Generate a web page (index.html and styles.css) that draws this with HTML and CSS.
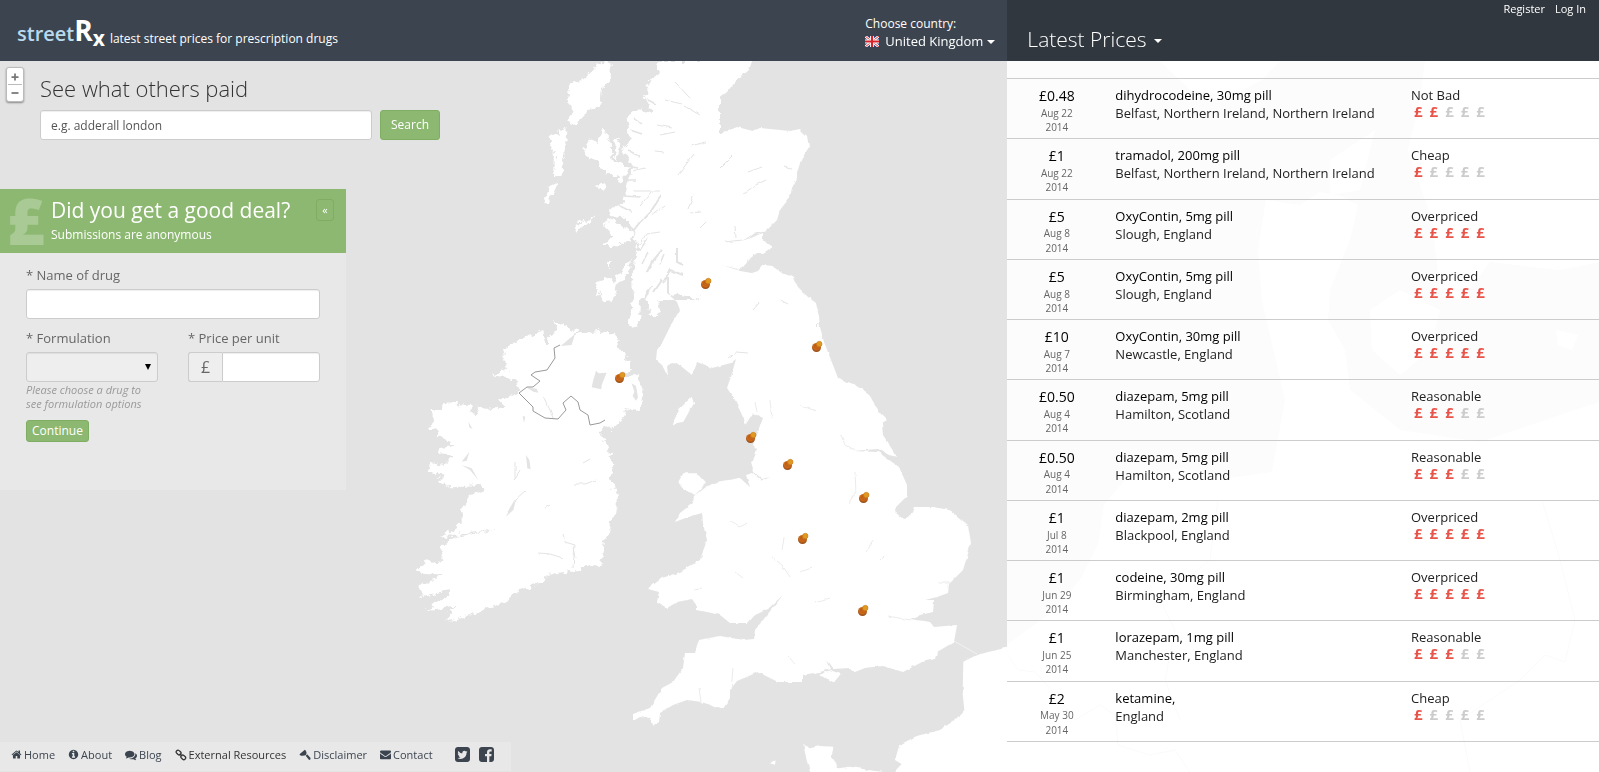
FILE: index.html
```html
<!DOCTYPE html>
<html lang="en">
<head>
<meta charset="utf-8">
<title>StreetRx - latest street prices for prescription drugs</title>
<link rel="stylesheet" href="styles.css">
</head>
<body>
<svg class="map" viewBox="0 61 1599 711" preserveAspectRatio="xMinYMin slice" aria-hidden="true">
  <defs>
    <filter id="coast" filterUnits="userSpaceOnUse" x="380" y="40" width="700" height="760">
      <feTurbulence type="fractalNoise" baseFrequency="0.16" numOctaves="3" seed="4" result="n"/>
      <feDisplacementMap in="SourceGraphic" in2="n" scale="9" xChannelSelector="R" yChannelSelector="G"/>
    </filter>
    <filter id="shore" filterUnits="userSpaceOnUse" x="380" y="40" width="700" height="760">
      <feTurbulence type="fractalNoise" baseFrequency="0.14" numOctaves="2" seed="9" result="n"/>
      <feDisplacementMap in="SourceGraphic" in2="n" scale="3" xChannelSelector="R" yChannelSelector="G"/>
    </filter>
    <radialGradient id="pinBase" cx=".5" cy=".35" r=".65"><stop offset="0" stop-color="#a04c0c"/><stop offset=".55" stop-color="#cf6a1a"/><stop offset="1" stop-color="#8f4a18"/></radialGradient>
    <g id="pin">
      <circle cx="4.500" cy="6.500" r="4.500" fill="url(#pinBase)"/>
      <path d="M2.500 6.500 5 1.500 9.500 4 7 8Z" fill="#c4651a"/>
      <circle cx="7.300" cy="3" r="2.700" fill="#e09a22"/>
      <circle cx="7.300" cy="3" r="2.700" fill="none" stroke="#c87a1c" stroke-width=".6"/>
    </g>
  </defs>
  <rect y="61" width="1599" height="711" fill="#e3e3e3"/>
  <g fill="#fff" filter="url(#shore)">
    <path d="M659 50H756L752 61 749 70 737 80 727 92 717 100 709 107 708 113 700 117 717 115 713 122 706 134 690 152 707 139 713 138 725 132 737 127 753 131 760 128 790 131 800 129 807 136 809 147 801 160 797 173 797 178 792 188 790 197 780 210 777 220 766 231 753 234 742 241 763 233 763 240 773 247 763 253 757 253 748 260 745 266 737 269 722 265 740 271 752 273 758 271 763 265 772 266 782 273 793 277 798 287 808 297 816 303 819 317 820 327 824 342 831 360 838 378 853 384 868 393 880 413 887 420 882 423 883 435 897 457 889 455 878 449 853 451 878 452 899 467 907 485 907 496 896 507 895 512 903 519 910 517 914 507 933 507 950 510 968 525 971 543 967 557 963 570 949 584 948 593 937 597 925 600 934 600 933 612 920 615 910 619 930 622 934 627 957 625 954 642 937 652 935 659 922 662 903 672 883 666 865 668 855 672 850 668 833 669 826 660 830 669 820 672 802 675 802 682 778 682 758 672 737 681 730 690 730 698 723 709 717 708 702 702 687 700 673 705 660 713 659 722 654 727 650 718 640 717 633 721 633 714 650 708 662 688 673 682 683 668 685 653 695 653 699 640 720 636 743 640 754 639 755 630 767 615 783 595 768 609 753 616 747 623 730 623 720 615 707 612 697 610 697 606 692 599 677 602 667 608 657 602 659 592 648 589 662 578 680 572 700 560 707 540 703 523 702 513 688 517 675 522 680 513 693 503 694 496 705 487 717 482 740 478 750 487 746 475 753 473 762 481 770 477 762 479 754 472 751 462 757 449 753 445 758 432 763 418 753 413 746 424 742 415 735 400 727 388 732 373 736 359 731 363 712 368 697 362 692 375 682 367 675 362 667 365 668 377 662 365 656 360 657 350 662 343 672 323 680 310 677 302 667 293 660 270 645 300 700 300 700 50Z"/>
    <g transform="translate(620 360) scale(.33333)">
      <path d="M215 110 222 130 190 185 158 192 175 150Z"/>
      <path d="M175 365 190 340 230 340 258 370 225 405 190 385Z"/>
      <path d="M600 945 630 930 662 942 640 970Z"/>
      <path d="M1180 858 1130 870 1070 885 1030 905 1028 1000 1033 1050 1005 1080 960 1110 890 1128 838 1155 825 1200 845 1212 800 1260H1250V858Z"/>
      <path d="M550 1155 570 1165 600 1158 640 1160 635 1190 652 1215 655 1225 690 1220 760 1232 820 1240V1270H580L560 1200Z"/>
      <path d="M450 1210 467 1198 465 1214Z"/>
    </g>
  </g>
  <g fill="#fff" filter="url(#coast)">
    <path d="M659 61 657 77 647 82 650 92 643 95 653 112 635 110 627 117 630 137 623 150 633 167 628 183 623 203 608 210 610 215 622 216 634 231 638 247 632 273 633 300 628 327 639 325 640 300 648 290 657 280 667 293 700 300 720 200 720 61Z"/>
    <g transform="translate(400 60) scale(.33333)">
      <path d="M628 -10 600 10 545 60 510 70 500 120 520 145 505 180 525 195 560 160 555 145 600 140 605 85 630 65Z"/>
      <path d="M445 230 500 205 495 260 485 350 462 352 465 280Z"/>
      <path d="M475 365 445 380 430 430 440 430 460 400Z"/>
      <path d="M550 270 575 235 590 250 610 205 632 250 635 300 690 320 660 375 650 345 620 345 590 300 555 290Z"/>
      <path d="M610 485 640 475 670 500 700 520 695 545 640 555 600 555 640 530Z"/>
      <path d="M590 462 520 500 530 520Z"/>
      <path d="M585 705 600 660 635 650 650 690 635 725 615 728 605 695Z"/>
      <path d="M640 680 655 640 692 600 690 635 660 670Z"/>
      <path d="M745 705 770 705 778 765 755 765 738 720Z"/>
      <path d="M592 375 615 370 620 390 605 397Z"/>
      <path d="M620 610 632 602 622 628Z"/>
      <path d="M648 240 660 235 650 300 642 290Z"/>
    </g>
    <path transform="translate(400 310) scale(.33333)" d="M465 30 530 65 520 75 600 62 645 75 655 110 690 155 690 175 660 200 715 195 728 240 715 300 680 295 665 330 635 360 605 350 600 375 620 400 640 465 630 510 650 545 650 600 630 640 605 735 605 768 570 765 530 780 440 795 435 815 345 850 330 870 250 900 200 918 175 932 135 925 170 890 80 900 130 865 155 840 65 858 55 830 130 795 45 785 80 750 110 760 130 750 120 715 150 685 240 668 300 655 120 683 185 640 185 600 205 555 255 540 250 528 150 532 115 510 140 495 85 485 90 455 130 465 165 435 120 430 125 410 165 405 130 385 110 380 118 360 80 355 100 345 95 290 120 300 130 280 210 285 220 320 235 290 290 295 320 290 290 270 360 245 350 215 330 207 275 195 320 175 310 120 345 95 430 60 435 100 450 95 445 70 475 60Z"/>
  </g>
  <g fill="#e3e3e3" transform="translate(400 310) scale(.33333)">
    <path d="M482 108 525 72 515 105Z"/>
    <path d="M588 182 596 190 620 188 605 225 604 238 575 232 580 210Z"/>
    <path d="M695 220 708 228 714 262 708 272 698 258 703 245Z"/>
    <path d="M378 232 410 236 415 248 400 245Z"/>
    <path d="M378 435 388 450 392 478 382 475Z"/>
    <path d="M348 568 340 600 318 620 330 595Z"/>
    <path d="M185 455 208 425 200 452Z"/><path d="M185 465 215 475 235 510 210 480Z"/>
    <path d="M205 335 218 358 208 352Z"/><path d="M368 318 376 320 372 338Z"/>
  </g>
  <g fill="none" stroke="#e3e3e3" filter="url(#shore)">
    <path stroke-width="2" d="M634 230 640 222 651 211 661 196M619 218 627 225 634 230M647 272 652 262 662 250M663 283 670 270 683 275M677 248 677 262 683 265M662 280 654 292M668 277 668 292"/>
    <path stroke-width="1.500" d="M628 150 640 157M625 166 638 168M624 180 636 180M622 196 640 197M618 205 632 212M630 130 642 134M633 118 642 124M648 100 656 104M640 250 648 238M642 264 648 252M660 264 664 254"/>
    <path stroke-width="1" d="M678 175 694 154M688 209 694 194M690 213 701 212M675 82 690 98M684 106 700 115M665 100 682 104M660 135 675 132M657 125 672 128M690 146 706 142M655 151 664 152M632 171 645 168M633 191 660 191M640 244 646 234 660 232M640 206 651 192M665 206 652 215M720 168 732 156M742 195 754 186 766 180M748 172 762 167M784 167 792 169M724 242 742 240M700 228 706 222M735 226 736 238M816 326 820 322M780 300 788 304M728 358 736 352 748 353M753 310 760 302"/>
    <path stroke-width="1" stroke="#ebebeb" d="M841 435 845 445 855 451M855 472 856 492 848 504M784 538 782 550M772 557 782 565 790 577M730 520 740 527 747 523M800 572 812 568M866 552 873 540M880 560 884 556M888 616 900 618 910 620M788 656 795 664M755 402 757 412M770 400 772 418M800 405 816 411M695 590 702 588M699 688 701 702M733 668 731 690M938 583 950 583M735 572 743 578M815 603 830 598"/>
    <path stroke-width="1" d="M520 470 514 480M515 462 515 478M526 490 515 500 508 512M575 484 585 484 596 480M574 548 576 558M563 534 565 542 575 545 573 568M538 553 550 554 563 558M545 508 550 505M543 396 550 410 553 418M583 463 590 459"/>
  </g>
  <path fill="none" stroke="#999" stroke-width="1" d="M560 345 554 348 555 358 547 370 535 372 531 375 540 381 533 387 527 387 519 393 533 407 533 411 545 418 558 419 566 410 563 403 571 396 578 402 580 410 588 415 590 425 600 423 605 420"/>
  <path fill="none" stroke="#f1f1f1" d="M954 641 977 654"/>
  <g fill="#fff">
    <path d="M1008 644 1030 628 1052 612 1080 580 1098 545 1104 505 1125 480 1180 468 1230 478 1272 472 1285 400 1262 300 1258 250 1266 200 1300 205 1320 192 1340 196 1358 205 1350 240 1330 290 1328 320 1345 350 1350 390 1400 430 1480 442 1560 415 1599 402V772H1008Z"/>
    <path d="M1160 61H1280L1262 80 1230 96 1190 90Z"/>
    <path d="M1425 61H1599V262L1560 270 1490 262 1462 300 1440 290 1432 220 1408 150 1420 100Z"/>
    <path d="M1370 310 1400 290 1440 310 1430 350 1400 375 1372 350Z"/>
    <path d="M1556 330 1578 335 1572 350 1558 345Z"/>
    <path d="M1330 160 1375 130 1360 190 1330 195Z"/>
  </g>
  <g fill="none" stroke="#d4d4d4">
    <path d="M1008 655 1018 670 1035 672 1060 700 1075 720 1100 705 1115 715 1118 745 1150 755 1175 750 1190 772"/>
    <path d="M1218 500 1210 560 1160 600 1175 630 1165 680 1180 720"/>
    <path d="M1542 500 1560 560 1575 620 1565 662 1545 655 1520 680 1460 720 1470 772"/>
  </g>
  <g>
    <use href="#pin" x="701" y="278"/><use href="#pin" x="812" y="341"/><use href="#pin" x="615" y="372"/>
    <use href="#pin" x="746" y="432"/><use href="#pin" x="783" y="459"/><use href="#pin" x="859" y="492"/>
    <use href="#pin" x="798" y="533"/><use href="#pin" x="858" y="605"/>
  </g>
</svg>

<div class="page">
  <div class="main">
    <header class="topbar">
      <a class="logo" href="#"><span>street</span><b>R</b><b class="logo-x">x</b></a>
      <span class="tagline">latest street prices for prescription drugs</span>
      <div class="country">
        <span>Choose country:</span>
        <button class="country-btn" type="button">
          <svg class="flag" viewBox="0 0 14 11"><path fill="#26417f" d="M0 0h14v11H0z"/><path d="M0 0 14 11M14 0 0 11" stroke="#fff" stroke-width="2.600"/><path d="M0 0 14 11M14 0 0 11" stroke="#d33" stroke-width="1"/><path d="M7 0v11M0 5.500h14" stroke="#fff" stroke-width="4"/><path d="M7 0v11M0 5.500h14" stroke="#d8232a" stroke-width="2.200"/></svg>
          United Kingdom <i class="caret"></i>
        </button>
      </div>
    </header>
    <div class="stage">
      <div class="finder">
        <div class="zoom">
          <button type="button" aria-label="Zoom in"><svg viewBox="0 0 16 16"><path d="M8 4v8M4 8h8" stroke="#777" stroke-width="2"/></svg></button>
          <button type="button" aria-label="Zoom out"><svg viewBox="0 0 16 16"><path d="M4 8h8" stroke="#777" stroke-width="2"/></svg></button>
        </div>
        <form class="search">
          <h1><label for="q">See what others paid</label></h1>
          <div class="search-row">
            <input id="q" type="text" placeholder="e.g. adderall london">
            <button class="btn" type="button">Search</button>
          </div>
        </form>
      </div>
      <section class="panel">
        <div class="panel-head">
          <span class="pound" aria-hidden="true">£</span>
          <div class="panel-title">
            <h2>Did you get a good deal?</h2>
            <p>Submissions are anonymous</p>
          </div>
          <button class="btn collapse" type="button" aria-label="Collapse">«</button>
        </div>
        <form class="panel-body">
          <div class="field">
            <label for="drug">* Name of drug</label>
            <input id="drug" type="text">
          </div>
          <div class="cols">
            <div class="field">
              <label for="form">* Formulation</label>
              <div class="select"><select id="form" disabled><option></option></select></div>
              <small>Please choose a drug to see formulation options</small>
            </div>
            <div class="field">
              <label for="price">* Price per unit</label>
              <div class="group"><span>£</span><input id="price" type="text"></div>
            </div>
          </div>
          <button class="btn small" type="button">Continue</button>
        </form>
      </section>
      <footer class="foot">
        <a href="#"><svg viewBox="0 0 1792 1792"><path d="M1472 992v480q0 26-19 45t-45 19h-384v-384h-256v384h-384q-26 0-45-19t-19-45v-480q0-1 .5-3t.5-3l575-474 575 474q1 2 1 6zm223-69l-62 74q-8 9-21 11h-3q-13 0-21-7l-692-577-692 577q-12 8-24 7-13-2-21-11l-62-74q-8-10-7-23.500t11-21.500l719-599q32-26 76-26t76 26l244 204v-195q0-14 9-23t23-9h192q14 0 23 9t9 23v408l219 182q10 8 11 21.500t-7 23.500z"/></svg>Home</a>
        <a href="#"><svg viewBox="0 0 1792 1792"><path d="M1152 1376v-160q0-14-9-23t-23-9h-96v-512q0-14-9-23t-23-9h-320q-14 0-23 9t-9 23v160q0 14 9 23t23 9h96v320h-96q-14 0-23 9t-9 23v160q0 14 9 23t23 9h448q14 0 23-9t9-23zm-128-896v-160q0-14-9-23t-23-9h-192q-14 0-23 9t-9 23v160q0 14 9 23t23 9h192q14 0 23-9t9-23zm640 416q0 209-103 385.500t-279.500 279.500-385.500 103-385.500-103-279.500-279.500-103-385.500 103-385.500 279.500-279.500 385.500-103 385.500 103 279.500 279.500 103 385.500z"/></svg>About</a>
        <a class="wide" href="#"><svg viewBox="0 0 1792 1792"><path d="M1408 768q0 139-94 257t-256.500 186.500-353.500 68.500q-86 0-176-16-124 88-278 128-36 9-86 16h-3q-11 0-20.500-8t-11.500-21q-1-3-1-6.500t.5-6.500 2-6l2.500-5 3.500-5.500 4-5 4.500-5 4-4.500q5-6 23-25t26-29.500 22.500-29 25-38.500 20.500-44q-124-72-195-177t-71-224q0-139 94-257t256.500-186.500 353.500-68.500 353.500 68.500 256.500 186.500 94 257zm384 256q0 120-71 224.500t-195 176.500q10 24 20.500 44t25 38.500 22.500 29 26 29.500 23 25q1 1 4 4.500t4.500 5 4 5 3.500 5.500l2.500 5 2 6 .5 6.500-1 6.500q-3 14-13 22t-22 7q-50-7-86-16-154-40-278-128-90 16-176 16-271 0-472-132 58 4 88 4 161 0 309-45t264-129q125-92 192-212t67-254q0-77-23-152 129 71 204 178t75 230z"/></svg>Blog</a>
        <a class="wide dark" href="#"><svg viewBox="0 0 14 14"><g fill="none" stroke="currentColor" stroke-width="1.500"><rect x="1.200" y="2" width="6" height="4.200" rx="2" transform="rotate(42 4.200 4.100)"/><rect x="6.600" y="7.600" width="6" height="4.200" rx="2" transform="rotate(42 9.600 9.700)"/><path d="M5.500 5.500 8.500 8.500"/></g></svg>External Resources</a>
        <a class="wide" href="#"><svg viewBox="0 0 14 14"><path d="M6.800.8 8.600 2.600 3.800 8.200 1.200 7.200.6 6ZM7.500 2.500 9 4.500 8 7 5.500 8 4 7ZM7.800 8 9.500 6.200 13.500 10.500Q13.800 12.800 11.800 12.800Z"/></svg>Disclaimer</a>
        <a href="#"><svg viewBox="0 0 1792 1792"><path d="M1792 710v794q0 66-47 113t-113 47h-1472q-66 0-113-47t-47-113v-794q44 49 101 87 362 246 497 345 57 42 92.500 65.500t94.500 48 110 24.500h2q51 0 110-24.500t94.500-48 92.500-65.500q170-123 498-345 57-39 100-87zm0-294q0 79-49 151t-122 123q-376 261-468 325-10 7-42.500 30.500t-54 38-52 32.500-57.500 27-50 9h-2q-23 0-50-9t-57.500-27-52-32.500-54-38-42.500-30.500q-91-64-262-182.500t-205-142.500q-62-42-117-115.500t-55-136.500q0-78 41.500-130t118.500-52h1472q65 0 112.500 47t47.500 113z"/></svg>Contact</a>
        <span class="social">
          <a href="#" aria-label="Twitter"><svg viewBox="128 128 1536 1536"><path d="M1408 610q-56 25-121 34 68-40 93-117-65 38-134 51-61-66-153-66-87 0-148.500 61.500t-61.500 148.500q0 29 5 48-129-7-242-65t-192-155q-29 50-29 106 0 114 91 175-47-1-100-26v2q0 75 50 133.500t123 72.500q-29 8-51 8-13 0-39-4 21 63 74.500 104t121.500 42q-116 90-261 90-26 0-50-3 148 94 322 94 112 0 210-35.500t168-95 120.500-137 75-162 24.500-168.500q0-18-1-27 63-45 105-109zm256-194v960q0 119-84.500 203.500t-203.500 84.500h-960q-119 0-203.500-84.500t-84.500-203.500v-960q0-119 84.500-203.500t203.500-84.500h960q119 0 203.500 84.500t84.500 203.500z"/></svg></a>
          <a href="#" aria-label="Facebook"><svg viewBox="128 128 1536 1536"><path d="M1376 128q119 0 203.500 84.500t84.500 203.500v960q0 119-84.500 203.500t-203.500 84.500h-188v-595h199l30-232h-229v-148q0-56 23.500-84t91.500-28l122-1v-207q-63-9-178-9-136 0-217.500 80t-81.500 226v171h-200v232h200v595h-532q-119 0-203.500-84.500t-84.500-203.500v-960q0-119 84.500-203.500t203.500-84.500h960z"/></svg></a>
        </span>
      </footer>
    </div>
  </div>

  <aside class="side">
    <header class="side-head">
      <nav><a href="#">Register</a><a href="#">Log In</a></nav>
      <button class="side-title" type="button">Latest Prices <i class="caret"></i></button>
    </header>
    <div class="side-body">
      <table class="prices">
        <tbody>
          <tr><td class="cost"><b>£0.48</b><span>Aug 22<br>2014</span></td><td class="drug"><b>dihydrocodeine, 30mg pill</b>Belfast, Northern Ireland, Northern Ireland</td><td class="rate">Not Bad<span><i>£</i><i>£</i><s>£</s><s>£</s><s>£</s></span></td></tr>
          <tr><td class="cost"><b>£1</b><span>Aug 22<br>2014</span></td><td class="drug"><b>tramadol, 200mg pill</b>Belfast, Northern Ireland, Northern Ireland</td><td class="rate">Cheap<span><i>£</i><s>£</s><s>£</s><s>£</s><s>£</s></span></td></tr>
          <tr><td class="cost"><b>£5</b><span>Aug 8<br>2014</span></td><td class="drug"><b>OxyContin, 5mg pill</b>Slough, England</td><td class="rate">Overpriced<span><i>£</i><i>£</i><i>£</i><i>£</i><i>£</i></span></td></tr>
          <tr><td class="cost"><b>£5</b><span>Aug 8<br>2014</span></td><td class="drug"><b>OxyContin, 5mg pill</b>Slough, England</td><td class="rate">Overpriced<span><i>£</i><i>£</i><i>£</i><i>£</i><i>£</i></span></td></tr>
          <tr><td class="cost"><b>£10</b><span>Aug 7<br>2014</span></td><td class="drug"><b>OxyContin, 30mg pill</b>Newcastle, England</td><td class="rate">Overpriced<span><i>£</i><i>£</i><i>£</i><i>£</i><i>£</i></span></td></tr>
          <tr><td class="cost"><b>£0.50</b><span>Aug 4<br>2014</span></td><td class="drug"><b>diazepam, 5mg pill</b>Hamilton, Scotland</td><td class="rate">Reasonable<span><i>£</i><i>£</i><i>£</i><s>£</s><s>£</s></span></td></tr>
          <tr><td class="cost"><b>£0.50</b><span>Aug 4<br>2014</span></td><td class="drug"><b>diazepam, 5mg pill</b>Hamilton, Scotland</td><td class="rate">Reasonable<span><i>£</i><i>£</i><i>£</i><s>£</s><s>£</s></span></td></tr>
          <tr><td class="cost"><b>£1</b><span>Jul 8<br>2014</span></td><td class="drug"><b>diazepam, 2mg pill</b>Blackpool, England</td><td class="rate">Overpriced<span><i>£</i><i>£</i><i>£</i><i>£</i><i>£</i></span></td></tr>
          <tr><td class="cost"><b>£1</b><span>Jun 29<br>2014</span></td><td class="drug"><b>codeine, 30mg pill</b>Birmingham, England</td><td class="rate">Overpriced<span><i>£</i><i>£</i><i>£</i><i>£</i><i>£</i></span></td></tr>
          <tr><td class="cost"><b>£1</b><span>Jun 25<br>2014</span></td><td class="drug"><b>lorazepam, 1mg pill</b>Manchester, England</td><td class="rate">Reasonable<span><i>£</i><i>£</i><i>£</i><s>£</s><s>£</s></span></td></tr>
          <tr><td class="cost"><b>£2</b><span>May 30<br>2014</span></td><td class="drug"><b>ketamine,</b>England</td><td class="rate">Cheap<span><i>£</i><s>£</s><s>£</s><s>£</s><s>£</s></span></td></tr>
        </tbody>
      </table>
    </div>
  </aside>
</div>
</body>
</html>
```
FILE: styles.css
```css
* { box-sizing: border-box; }
body {
  margin: 0;
  font: 13px/18px "Open Sans", "Noto Sans", sans-serif;
  color: #222;
  background: #e3e3e3;
}
h1, h2, p { margin: 0; font-weight: 400; }
a { color: inherit; text-decoration: none; }
button, input, select { font: inherit; color: inherit; }
button { cursor: pointer; }

.map {
  position: absolute;
  top: 61px;
  left: 0;
  width: 100%;
  height: calc(100vh - 61px);
}
.page {
  position: relative;
  display: grid;
  grid-template-columns: 63fr 37fr;
  min-height: 100vh;
}
.main, .side { display: flex; flex-direction: column; min-width: 0; }

.topbar {
  display: flex;
  align-items: flex-start;
  height: 61px;
  padding: 9px 12px 0 17px;
  background: #3c454f;
  color: #fff;
}
.logo { display: flex; align-items: baseline; line-height: 42px; }
.logo span { font-size: 20px; font-weight: 600; color: #b9d9ee; }
.logo b { font-size: 28px; }
.logo .logo-x { align-self: flex-end; font-size: 21px; line-height: 34px; }
.tagline { margin: 21px 0 0 5px; font-size: 12px; }
.country { margin: 6px 0 0 auto; font-size: 12px; font-weight: 500; }
.country span { display: block; }
.country-btn {
  display: flex;
  align-items: center;
  padding: 0;
  border: 0;
  background: none;
  font-size: 13px;
  font-weight: 400;
  line-height: 17px;
}
.flag { width: 14px; height: 11px; margin-right: 6px; }
.caret {
  display: inline-block;
  margin-left: 4px;
  border: 4px solid transparent;
  border-top-color: currentColor;
  border-bottom: 0;
  vertical-align: middle;
}

.stage { display: flex; flex: 1; flex-direction: column; align-items: flex-start; }
.finder { display: flex; gap: 16px; padding: 6px; }
.zoom {
  align-self: flex-start;
  display: grid;
  padding: 1px;
  border: 1px solid #bbb;
  border-radius: 3px;
  background: #fff;
  box-shadow: 0 1px 2px #888;
}
.zoom button { display: block; width: 14px; height: 15px; padding: 0; border: 0; background: none; }
.zoom button + button { height: 16px; border-top: 1px solid #bbb; }
.zoom svg { display: block; width: 14px; height: 14px; }
.search { padding-top: 7px; }
.search h1 { font-size: 22px; font-weight: 300; line-height: 28px; color: #333; }
.search-row { display: flex; gap: 8px; margin-top: 8px; }
input, select {
  height: 30px;
  width: 100%;
  padding: 0 10px;
  border: 1px solid #ccc;
  border-radius: 3px;
  background: #fff;
  box-shadow: inset 0 1px 1px rgba(0, 0, 0, .07);
}
.search input { width: 332px; font-size: 12px; }
::placeholder { color: #555; opacity: 1; }
.btn {
  padding: 0 10px;
  border: 1px solid #7fae62;
  border-radius: 3px;
  background: #8cb871;
  color: #fff;
  font-size: 12px;
  font-weight: 500;
}

.panel { width: 346px; margin-top: 43px; background: rgba(255, 255, 255, .2); }
.panel-head {
  display: flex;
  height: 64px;
  padding: 10px 12px 0 7px;
  background: #8cb871;
  color: #fff;
}
.pound { width: 44px; font-size: 64px; font-weight: 800; line-height: 44px; opacity: .25; }
.panel-title h2 { font-size: 21px; line-height: 22px; }
.panel-title p { font-size: 12px; line-height: 28px; }
.collapse { width: 18px; height: 22px; margin-left: auto; padding: 0; font-size: 11px; line-height: 14px; }
.panel-body { padding: 13px 26px 48px; color: #666; }
.field label { display: block; margin-bottom: 5px; }
.cols { display: grid; grid-template-columns: 1fr 1fr; gap: 30px; margin: 10px 0 9px; }
.select { position: relative; }
.select select { display: block; appearance: none; background: #eee; opacity: 1; }
.select::after {
  content: "";
  position: absolute;
  top: 12px;
  right: 7px;
  border: 3px solid transparent;
  border-top: 6px solid #000;
  border-bottom: 0;
}
.field small { display: block; margin-top: 1px; font-size: 11px; font-style: italic; line-height: 14px; color: #999; }
.group { display: flex; }
.group span {
  flex: none;
  width: 34px;
  border: 1px solid #ccc;
  border-right: 0;
  border-radius: 3px 0 0 3px;
  background: #eee;
  font-size: 16px;
  line-height: 28px;
  text-align: center;
}
.group input { min-width: 0; border-radius: 0 3px 3px 0; }
.small { height: 22px; padding: 0 5px; }

.foot {
  display: flex;
  align-items: center;
  gap: 13px;
  height: 29px;
  margin: auto 0 1px;
  padding: 0 17px 4px 11px;
  background: rgba(255, 255, 255, .2);
  color: #3c454f;
  font-size: 11px;
}
.foot a { display: flex; align-items: center; gap: 2px; }
.foot .dark { color: #333; }
.foot svg { width: 11px; height: 11px; fill: currentColor; }
.foot .wide svg { width: 12px; height: 12px; }
.social { display: flex; gap: 9px; margin-left: 9px; }
.foot .social svg { width: 15px; height: 15px; }

.side-head {
  height: 61px;
  padding: 0 13px 0 20px;
  background: #31373f;
  color: #fff;
}
.side-head nav { display: flex; justify-content: flex-end; gap: 10px; font-size: 11px; font-weight: 500; }
.side-title {
  display: block;
  padding: 0;
  border: 0;
  background: none;
  font-size: 21px;
  font-weight: 300;
  line-height: 42px;
}
.side-title .caret { margin-left: 2px; }
.side-body { flex: 1; padding-top: 17px; background: rgba(255, 255, 255, .88); }
.prices { width: 100%; border-spacing: 0; border-top: 1px solid #ccc; table-layout: fixed; }
.prices td { padding: 7px 0 4px; border-bottom: 1px solid #ccc; vertical-align: top; }
.prices b { display: block; font-weight: 500; color: #000; }
.cost { width: 99px; text-align: center; line-height: 1.42; }
.cost b { font-size: 14px; }
.cost span { display: block; font-size: 10px; color: #666; }
.prices .drug { padding-left: 9px; }
.rate { width: 188px; }
.rate span { display: flex; gap: 7px; padding-left: 3px; font-size: 15px; font-weight: 700; line-height: 14px; }
.rate i { font-style: normal; color: #e9544a; }
.rate s { text-decoration: none; color: #ccc; }
```
